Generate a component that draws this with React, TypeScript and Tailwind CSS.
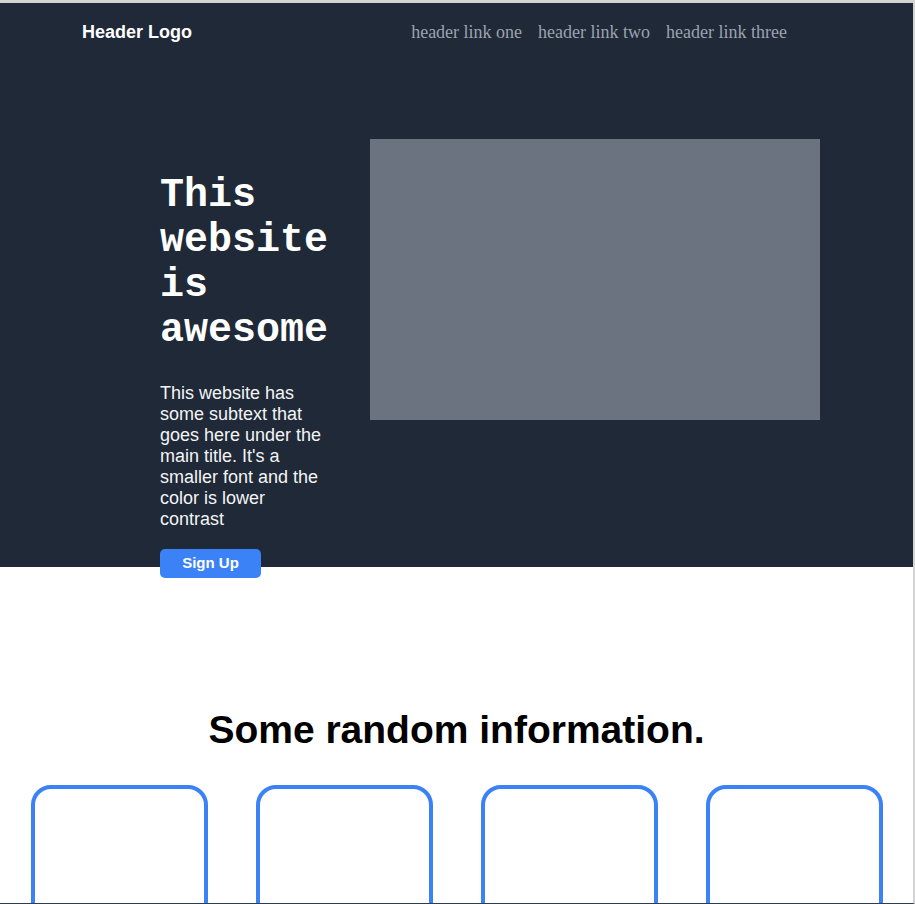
export default function App() {
  const links = ["header link one", "header link two", "header link three"];
  const cards = [1, 2, 3, 4];

  return (
    <div className="h-[904px] overflow-hidden border-t-[3px] border-t-[#d4d4d4] border-r-2 border-r-[#d4d4d4] border-b border-b-[#2c3e50] bg-white">
      {/* hero */}
      <div className="h-[564px] bg-[#1f2937]">
        <header className="flex h-[58px] items-center justify-between pl-[82px] pr-[126px]">
          <div className="font-['Liberation_Sans',Arial,sans-serif] text-[18px] font-bold text-white">
            Header Logo
          </div>
          <nav className="flex gap-4">
            {links.map((link) => (
              <a
                key={link}
                href="#"
                className="font-['Liberation_Serif','Times_New_Roman',serif] text-[18px] text-[#9ca3af]"
              >
                {link}
              </a>
            ))}
          </nav>
        </header>

        <div className="flex items-start gap-[38px] pl-[160px] pt-[78px]">
          <div className="mt-[34px] w-[172px] shrink-0">
            <h1 className="mb-[30px] font-['Liberation_Mono','Courier_New',monospace] text-[40px] font-bold leading-[45px] text-white">
              This website is awesome
            </h1>
            <p className="font-['Liberation_Sans',Arial,sans-serif] text-[18px] leading-[21px] text-[#f3f4f6]">
              This website has some subtext that goes here under the main title. It's a smaller font and the color is
              lower contrast
            </p>
            <button className="mt-[19px] h-[29px] w-[101px] rounded-[5px] bg-[#3b82f6] font-['Liberation_Sans',Arial,sans-serif] text-[15px] font-bold text-white">
              Sign Up
            </button>
          </div>
          <div className="h-[281px] w-[450px] bg-[#6b7280]" />
        </div>
      </div>

      {/* info */}
      <section className="pt-[142px]">
        <h2 className="mb-[34px] text-center font-['Liberation_Sans',Arial,sans-serif] text-[39px] font-bold leading-[42px] text-black">
          Some random information.
        </h2>
        <div className="flex justify-between pl-[31px] pr-[30px]">
          {cards.map((c) => (
            <div key={c} className="h-[220px] w-[177px] rounded-[20px] border-4 border-[#3b82f6]" />
          ))}
        </div>
      </section>
    </div>
  );
}
